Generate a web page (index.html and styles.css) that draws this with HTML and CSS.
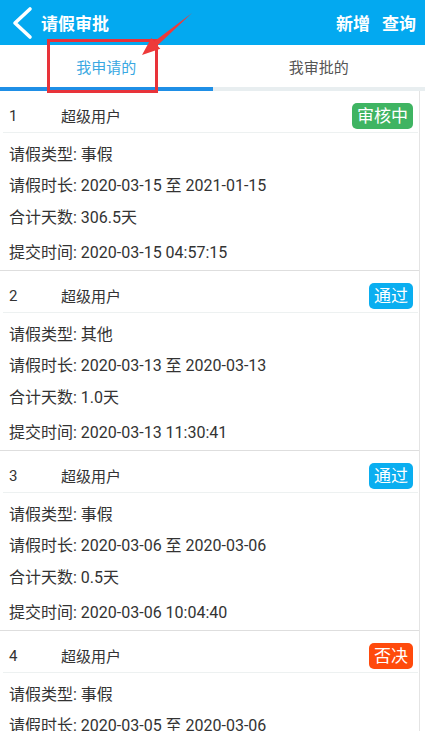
FILE: index.html
```html
<!DOCTYPE html>
<html lang="zh-CN">

<head>
    <meta charset="UTF-8">
    <meta name="viewport" content="width=device-width, initial-scale=1.0">
    <title>请假审批</title>
    <link rel="stylesheet" href="styles.css">
</head>

<body>

    <div class="topbar">
        <svg class="back" width="24" height="34" viewBox="0 0 24 34">
            <polyline points="20,3 5,17 20,31" fill="none" stroke="#fff" stroke-width="3.6" stroke-linecap="round" stroke-linejoin="round" />
        </svg>
        <span class="title">请假审批</span>
        <div class="actions">
            <span>新增</span>
            <span>查询</span>
        </div>
    </div>

    <div class="tabs">
        <div class="tab active">我申请的</div>
        <div class="tab">我审批的</div>
    </div>

    <div class="list">
        <div class="card">
            <div class="card-head">
                <span class="num">1</span>
                <span class="user">超级用户</span>
                <span class="badge pending">审核中</span>
            </div>
            <div class="card-body">
                <p>请假类型: 事假</p>
                <p>请假时长: 2020-03-15 至 2021-01-15</p>
                <p>合计天数: 306.5天</p>
                <p class="last">提交时间: 2020-03-15 04:57:15</p>
            </div>
        </div>
        <div class="card">
            <div class="card-head">
                <span class="num">2</span>
                <span class="user">超级用户</span>
                <span class="badge pass">通过</span>
            </div>
            <div class="card-body">
                <p>请假类型: 其他</p>
                <p>请假时长: 2020-03-13 至 2020-03-13</p>
                <p>合计天数: 1.0天</p>
                <p class="last">提交时间: 2020-03-13 11:30:41</p>
            </div>
        </div>
        <div class="card">
            <div class="card-head">
                <span class="num">3</span>
                <span class="user">超级用户</span>
                <span class="badge pass">通过</span>
            </div>
            <div class="card-body">
                <p>请假类型: 事假</p>
                <p>请假时长: 2020-03-06 至 2020-03-06</p>
                <p>合计天数: 0.5天</p>
                <p class="last">提交时间: 2020-03-06 10:04:40</p>
            </div>
        </div>
        <div class="card">
            <div class="card-head">
                <span class="num">4</span>
                <span class="user">超级用户</span>
                <span class="badge reject">否决</span>
            </div>
            <div class="card-body">
                <p>请假类型: 事假</p>
                <p>请假时长: 2020-03-05 至 2020-03-06</p>
            </div>
        </div>
    </div>

    <!-- annotation overlay -->
    <div class="mark-box"></div>
    <svg class="mark-arrow" width="425" height="100" viewBox="0 0 425 100">
        <polygon points="142,55 160.3,48.8 157.4,45.6 192,13 154.2,41.4 151.3,38" fill="#ee3a3a" />
    </svg>

</body>

</html>
```

FILE: styles.css
```css
body {
    margin: 0;
    font-family: Roboto, "Noto Sans CJK SC", sans-serif;
    color: #333;
    background-color: #fff;
    width: 425px;
    height: 731px;
    overflow: hidden;
    position: relative;
}

.topbar {
    height: 45px;
    background-color: #03a9f0;
    color: #fff;
    display: flex;
    align-items: center;
    padding: 0 9px 0 10px;
    box-sizing: border-box;
}

.back {
    display: block;
}

.title {
    font-size: 17px;
    font-weight: bold;
    margin-left: 7px;
}

.actions {
    margin-left: auto;
    display: flex;
    gap: 12px;
    font-size: 17px;
    font-weight: bold;
}

.tabs {
    display: flex;
    height: 46px;
}

.tab {
    flex: 1;
    display: flex;
    align-items: center;
    justify-content: center;
    font-size: 15px;
    color: #555;
    border-bottom: 4px solid #e8eef0;
}

.tab.active {
    color: #3aa8e2;
    border-bottom-color: #1f8fe6;
}

.list {
    width: 420px;
    border-right: 1px solid #e4e4e4;
    box-sizing: border-box;
}

.card {
    height: 180px;
    box-sizing: border-box;
    border-bottom: 1px solid #dedede;
}

.card-head {
    height: 41px;
    box-sizing: border-box;
    padding: 8px 6px 0 9px;
    display: flex;
    align-items: center;
    font-size: 15px;
}

.num {
    width: 52px;
}

.badge {
    margin-left: auto;
    height: 26px;
    line-height: 26px;
    padding: 0 5px;
    border-radius: 5px;
    color: #fff;
    font-size: 17px;
}

.badge.pending {
    background-color: #3fb462;
}

.badge.pass {
    background-color: #0aaef0;
}

.badge.reject {
    background-color: #ff4a0c;
}

.card-body {
    border-top: 1px solid #edf1f1;
    margin: 0 1px 0 3px;
    padding: 6px 0 0 6px;
}

.card-body p {
    margin: 0;
    height: 31px;
    line-height: 31px;
    font-size: 16px;
}

.card-body p:nth-child(3) {
    margin-top: 1px;
}

.card-body p.last {
    margin-top: 4px;
}

.mark-box {
    position: absolute;
    left: 47px;
    top: 39px;
    width: 111px;
    height: 54px;
    border: 3px solid #e8333a;
    box-sizing: border-box;
}

.mark-arrow {
    position: absolute;
    left: 0;
    top: 0;
}
```
